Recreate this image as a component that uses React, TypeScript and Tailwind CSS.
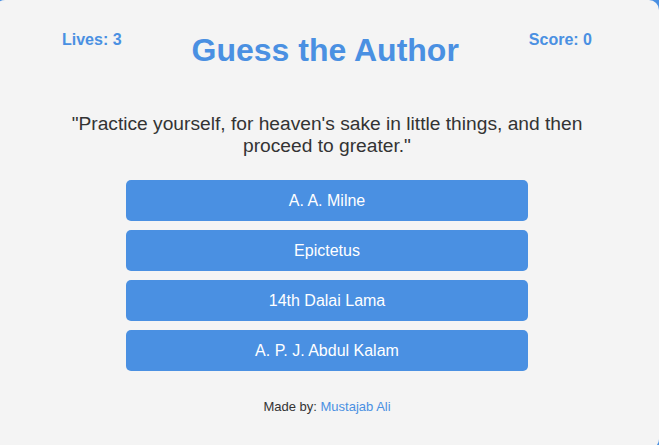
export default function App() {
  const options = ["A. A. Milne", "Epictetus", "14th Dalai Lama", "A. P. J. Abdul Kalam"];
  return (
    <div
      className="w-[659px] h-[445px] overflow-hidden bg-[#4a90e2]"
      style={{ fontFamily: '"Liberation Sans", Arial, sans-serif' }}
    >
      <div className="w-[664px] h-[449px] ml-[-5px] rounded-[10px] bg-[#f4f4f4] flex flex-col">
        <div className="flex justify-between items-start pl-[67px] pr-[67px] pt-[31px]">
          <div className="text-[16px] leading-[18px] font-bold text-[#4a90e2]">Lives: 3</div>
          <h1 className="mt-[1px] text-[32px] leading-[37px] font-bold text-[#4a90e2]">Guess the Author</h1>
          <div className="text-[16px] leading-[18px] font-bold text-[#4a90e2]">Score: 0</div>
        </div>
        <p className="mt-[44px] w-[560px] mx-auto text-center text-[19.2px] leading-[22px] text-[#333333]">
          "Practice yourself, for heaven's sake in little things, and then proceed to greater."
        </p>
        <div className="mt-[23px] flex flex-col items-center gap-[9px]">
          {options.map((o) => (
            <button
              key={o}
              className="w-[402px] h-[41px] rounded-[5px] bg-[#4a90e2] text-white text-[16px] leading-[18px]"
            >
              {o}
            </button>
          ))}
        </div>
        <div className="mt-[28px] text-center text-[13px] leading-[15px] text-[#333333]">
          Made by: <span className="text-[#4a90e2]">Mustajab Ali</span>
        </div>
      </div>
    </div>
  );
}
